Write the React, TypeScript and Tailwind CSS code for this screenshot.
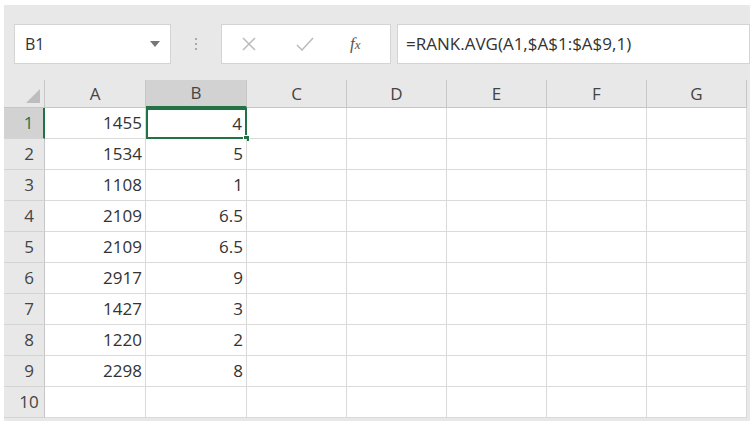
const cols = ["A","B","C","D","E","F","G"];
const data: [string,string][] = [["1455","4"],["1534","5"],["1108","1"],["2109","6.5"],["2109","6.5"],["2917","9"],["1427","3"],["1220","2"],["2298","8"],["",""]];
export default function App(){
  const colW = "grid-cols-[41px_101px_101px_100px_100px_100px_100px_100px]";
  return (
    <div className="w-[750px] h-[421px] overflow-hidden bg-white pl-[4px] pt-[5px]" style={{fontFamily:'"Segoe UI","Open Sans","Liberation Sans",sans-serif'}}>
      <div className="bg-[#e8e8e8] h-[416px] overflow-hidden">
        <div className="h-[75px] flex items-center pt-[2px]">
          <div className="ml-[10px] w-[157px] h-[40px] bg-white border border-[#d4d4d4] flex items-center px-[10px] text-[16px] text-[#333]">
            <span className="flex-1">B1</span>
            <svg width="10" height="6" viewBox="0 0 10 6"><path d="M0 0h10L5 6z" fill="#777"/></svg>
          </div>
          <div className="w-[50px] flex flex-col items-center gap-[3px]">
            <span className="w-[2px] h-[2px] bg-[#aaa]"/><span className="w-[2px] h-[2px] bg-[#aaa]"/><span className="w-[2px] h-[2px] bg-[#aaa]"/>
          </div>
          <div className="w-[170px] h-[40px] bg-white border border-[#d4d4d4] flex items-center">
            <svg className="ml-[20px]" width="14" height="14" viewBox="0 0 14 14"><path d="M1 1l12 12M13 1L1 13" stroke="#bbb" strokeWidth="1.5"/></svg>
            <svg className="ml-[40px]" width="18" height="14" viewBox="0 0 18 14"><path d="M1 8l5 5L17 1" stroke="#bbb" strokeWidth="1.5" fill="none"/></svg>
            <span className="ml-[36px] text-[17px] italic text-[#555]" style={{fontFamily:'"Liberation Serif",serif'}}>f<span className="text-[13px]">x</span></span>
          </div>
          <div className="ml-[6px] flex-1 h-[40px] bg-white border border-[#d4d4d4] flex items-center pl-[8px] text-[17px] text-[#333]">=RANK.AVG(A1,$A$1:$A$9,1)</div>
        </div>
        <div className={`grid ${colW} grid-rows-[28px] text-[17px]`}>
          <div className="border-r border-b border-[#c6c6c6] flex items-end justify-end p-[4px]">
            <svg width="14" height="14" viewBox="0 0 14 14"><path d="M14 0v14H0z" fill="#bdbdbd"/></svg>
          </div>
          {cols.map(c=>(
            <div key={c} className={`border-r border-b flex items-center justify-center text-[#444] ${c==="B"?"bg-[#d2d2d2] border-b-[#217346] border-b-2":"border-[#c6c6c6]"} border-r-[#c6c6c6]`}>{c}</div>
          ))}
        </div>
        {data.map((r,i)=>(
          <div key={i} className={`grid ${colW} h-[31px] text-[17px]`}>
            <div className={`flex items-center justify-center border-b border-[#d4d4d4] pl-[10px] ${i===0?"bg-[#d2d2d2] text-[#217346] border-r-2 border-r-[#217346]":"text-[#444] border-r border-r-[#c6c6c6]"}`}>{i+1}</div>
            <div className="bg-white border-r border-b border-[#dadada] flex items-center justify-end pr-[3px] text-[#333]">{r[0]}</div>
            <div className={`bg-white flex items-center justify-end pr-[3px] text-[#333] relative ${i===0?"border-2 border-[#217346]":"border-r border-b border-[#dadada]"}`}>
              {r[1]}
              {i===0 && <span className="absolute right-[-5px] bottom-[-5px] w-[7px] h-[7px] bg-[#217346] border border-white"/>}
            </div>
            {[0,1,2,3,4].map(k=><div key={k} className="bg-white border-r border-b border-[#dadada]"/>)}
          </div>
        ))}
      </div>
    </div>
  );
}
